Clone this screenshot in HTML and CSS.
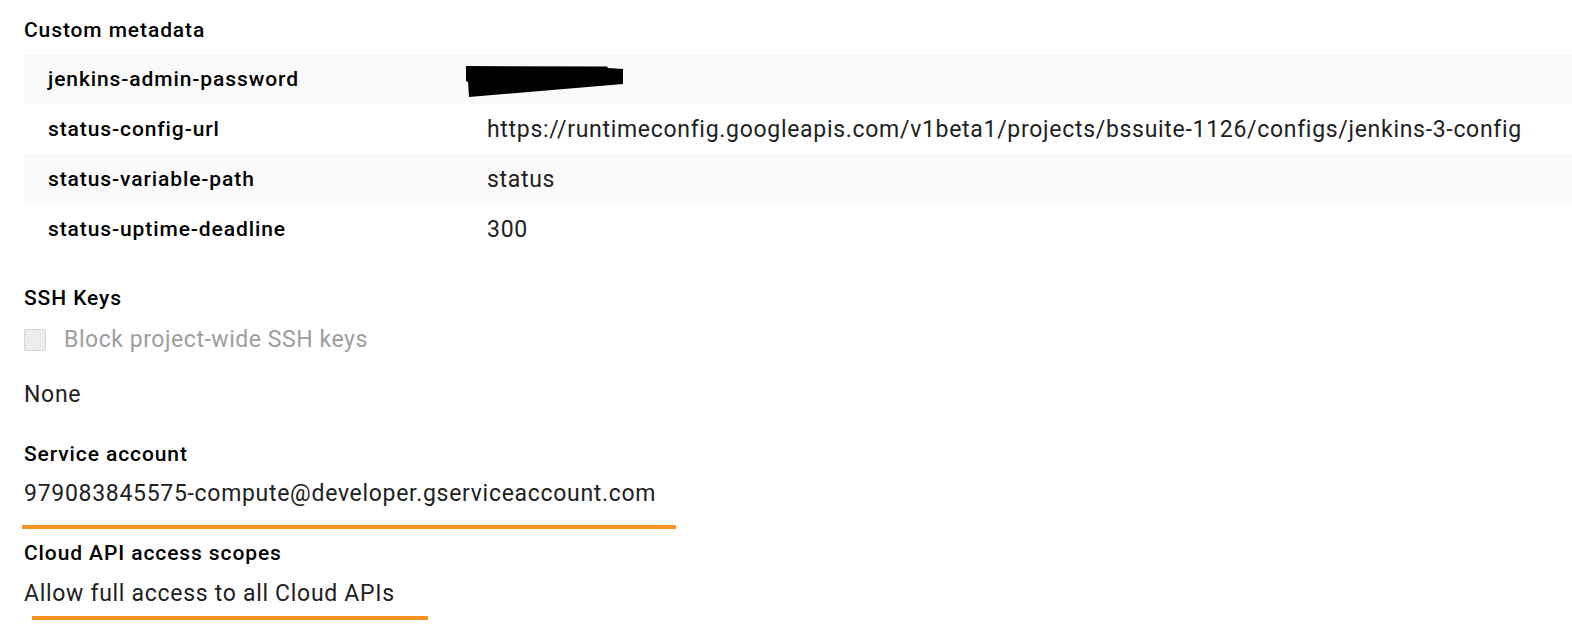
FILE: index.html
```html
<!DOCTYPE html>
<html>
<head>
<meta charset="utf-8">
<link rel="stylesheet" href="styles.css">
</head>
<body>
<div class="page">
  <section class="block meta">
    <h2 class="title">Custom metadata</h2>
    <div class="table">
      <div class="row shade">
        <div class="key">jenkins-admin-password</div>
        <div class="val">
          <svg class="redact" width="160" height="34" viewBox="464 64 160 34">
            <polygon points="466,66 607,66.5 608,68 623,69 623,84 469,97 468,82 466,81" fill="#000"/>
          </svg>
        </div>
      </div>
      <div class="row">
        <div class="key">status-config-url</div>
        <div class="val">https://runtimeconfig.googleapis.com/v1beta1/projects/bssuite-1126/configs/jenkins-3-config</div>
      </div>
      <div class="row shade">
        <div class="key">status-variable-path</div>
        <div class="val">status</div>
      </div>
      <div class="row">
        <div class="key">status-uptime-deadline</div>
        <div class="val">300</div>
      </div>
    </div>
  </section>

  <section class="block ssh">
    <h2 class="title">SSH Keys</h2>
    <label class="check">
      <span class="box"></span>
      <span class="check-label">Block project-wide SSH keys</span>
    </label>
    <div class="value none">None</div>
  </section>

  <section class="block sa">
    <h2 class="title">Service account</h2>
    <div class="value">979083845575-compute@developer.gserviceaccount.com</div>
    <div class="mark mark-sa"></div>
  </section>

  <section class="block scopes">
    <h2 class="title">Cloud API access scopes</h2>
    <div class="value">Allow full access to all Cloud APIs</div>
    <div class="mark mark-scopes"></div>
  </section>
</div>
</body>
</html>
```

FILE: styles.css
```css
html, body {
  margin: 0;
  padding: 0;
  background: #fff;
}

body {
  font-family: Roboto, "Liberation Sans", sans-serif;
  color: #212121;
}

.page {
  padding: 18px 0 0 24px;
  display: flex;
  flex-direction: column;
}

.title {
  margin: 0;
  font-size: 21px;
  font-weight: 500;
  letter-spacing: 0.9px;
  color: #000;
  line-height: 24px;
}

.table {
  margin-top: 12px;
  display: flex;
  flex-direction: column;
}

.row {
  display: grid;
  grid-template-columns: 463px 1fr;
  height: 50px;
  align-items: center;
}

.row.shade {
  background: #fafafa;
}

.key {
  padding-left: 24px;
  font-size: 21px;
  font-weight: 500;
  letter-spacing: 0.9px;
  color: #000;
}

.val {
  font-size: 23px;
  letter-spacing: 0.7px;
  color: #212121;
  display: flex;
  align-items: center;
}

.redact {
  display: block;
  margin-left: -23px;
  margin-top: 4px;
}

.ssh {
  margin-top: 32px;
}

.check {
  display: flex;
  align-items: center;
  gap: 18px;
  margin-top: 16px;
}

.box {
  width: 20px;
  height: 20px;
  border: 1px solid #d6d6d6;
  background: #ececec;
  border-radius: 1px;
}

.check-label {
  font-size: 23px;
  letter-spacing: 0.55px;
  color: #9e9e9e;
}

.value {
  font-size: 23px;
  letter-spacing: 0.7px;
  color: #212121;
  line-height: 28px;
}

.none {
  margin-top: 28px;
}

.sa {
  margin-top: 33px;
}

.sa .value {
  margin-top: 14px;
}

.mark {
  height: 4px;
  background: #f7931e;
}

.mark-sa {
  width: 654px;
  margin-left: -2px;
  margin-top: 17px;
}

.scopes {
  margin-top: 12px;
}

.scopes .value {
  margin-top: 15px;
}

.mark-scopes {
  width: 396px;
  margin-left: 8px;
  margin-top: 8px;
}
```
